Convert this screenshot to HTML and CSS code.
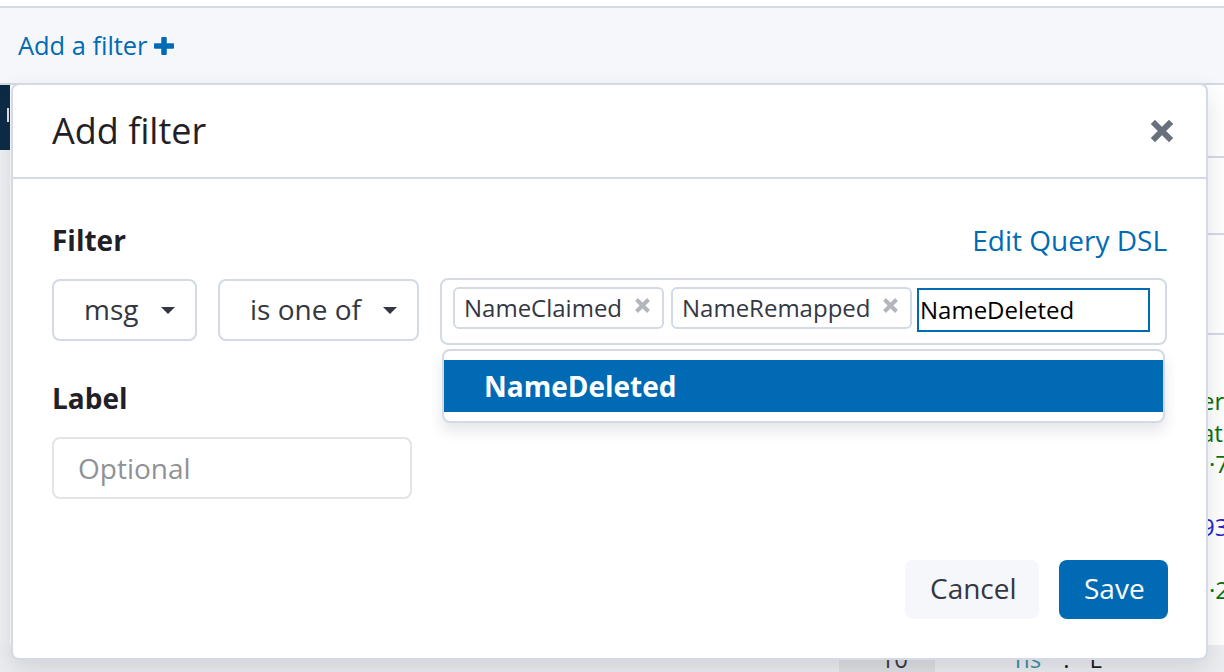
FILE: index.html
```html
<!DOCTYPE html>
<html lang="en">
<head>
<meta charset="utf-8">
<title>Add filter</title>
<link rel="stylesheet" href="styles.css">
</head>
<body>
<div class="app">
  <div class="topstrip"></div>
  <div class="filterbar">
    <a class="add-filter">Add a filter <svg class="plus-icon" viewBox="0 0 20 18" aria-hidden="true"><rect x="7.25" y="0" width="5.5" height="18" rx="1"/><rect x="0" y="6.25" width="20" height="5.5" rx="1"/></svg></a>
  </div>
  <div class="main">
    <aside class="sidebar">
      <div class="sidebar-head"><span class="sidebar-mark"></span></div>
    </aside>
    <section class="table-area"></section>
    <section class="doc-edge">
      <div class="doc-row r1"></div>
      <div class="doc-row r2"></div>
      <div class="doc-row r3"></div>
      <div class="code">
        <div class="ln green cut">er</div>
        <div class="ln green cut">at</div>
        <div class="ln green">·7</div>
        <div class="ln">&nbsp;</div>
        <div class="ln blue cut">93</div>
        <div class="ln">&nbsp;</div>
        <div class="ln green">·2</div>
      </div>
    </section>
  </div>
  <div class="bottom-row">
    <span class="num-cell">10</span>
    <span class="tok teal">ns</span>
    <span class="tok colon">:</span>
    <span class="tok">L</span>
  </div>
</div>

<div class="modal" role="dialog" aria-label="Add filter">
  <div class="modal-header">
    <h2 class="modal-title">Add filter</h2>
    <button class="modal-close" aria-label="Close"><svg viewBox="0 0 24 24" aria-hidden="true"><path d="M5 5L19 19M19 5L5 19"/></svg></button>
  </div>
  <div class="modal-body">
    <div class="field-head">
      <span class="field-label">Filter</span>
      <a class="dsl-link">Edit Query DSL</a>
    </div>
    <div class="filter-row">
      <div class="select sel-field"><span>msg</span><span class="caret"></span></div>
      <div class="select sel-op"><span>is one of</span><span class="caret"></span></div>
      <div class="combo">
        <span class="pill p1"><span>NameClaimed</span><svg class="pill-x" viewBox="0 0 17 17" aria-hidden="true"><path d="M2.5 2.5L14.5 14.5M14.5 2.5L2.5 14.5"/></svg></span>
        <span class="pill p2"><span>NameRemapped</span><svg class="pill-x" viewBox="0 0 17 17" aria-hidden="true"><path d="M2.5 2.5L14.5 14.5M14.5 2.5L2.5 14.5"/></svg></span>
        <input class="combo-input" type="text" value="NameDeleted">
        <div class="combo-list">
          <div class="combo-option active">NameDeleted</div>
        </div>
      </div>
    </div>
    <div class="field-label label-2">Label</div>
    <input class="text-input" type="text" placeholder="Optional">
  </div>
  <div class="modal-footer">
    <button class="btn btn-cancel">Cancel</button>
    <button class="btn btn-save">Save</button>
  </div>
</div>
</body>
</html>
```
FILE: styles.css
```css
html, body {
  margin: 0;
  padding: 0;
}

body {
  width: 1224px;
  height: 672px;
  overflow: hidden;
  position: relative;
  background: #fff;
  color: #343741;
  font-family: "Open Sans", "Noto Sans", sans-serif;
}

/* ---------- background page ---------- */
.topstrip {
  height: 6px;
  background: #fff;
  border-bottom: 2px solid #d3dae6;
}

.filterbar {
  height: 75px;
  box-sizing: border-box;
  background: #f5f7fa;
  padding: 19px 0 0 18px;
}

.add-filter {
  display: block;
  color: #006bb4;
  font-size: 25.4px;
  line-height: 37px;
  text-decoration: none;
}

.plus-icon {
  width: 20px;
  height: 18px;
  fill: #006bb4;
  vertical-align: baseline;
}

.main {
  display: grid;
  grid-template-columns: 10px 1198px 16px;
  height: 562px;
  box-sizing: border-box;
  border-top: 2px solid #d3dae6;
}

.sidebar {
  background: #eef0f4;
}

.sidebar-head {
  height: 65px;
  background: #0d2a45;
  padding-top: 23px;
  box-sizing: border-box;
}

.sidebar-mark {
  display: block;
  width: 2px;
  height: 14px;
  margin-left: 7px;
  background: #dfe6ee;
}

.table-area {
  background: #fff;
}

.doc-edge {
  background: #fff;
  overflow: hidden;
}

.doc-row {
  border-bottom: 2px solid #d3dae6;
}

.r1 { height: 71px; }
.r2 { height: 75px; }
.r3 { height: 98px; }

.code {
  padding-top: 50px;
  font-size: 24px;
  line-height: 31.5px;
  white-space: nowrap;
}

.ln {
  padding-left: 1px;
}

.ln.cut {
  text-indent: -8px;
}

.green { color: #0a700a; }
.blue { color: #2222c8; }

.bottom-row {
  display: flex;
  height: 27px;
  background: #eceef1;
  padding-left: 839px;
  font-size: 24px;
  line-height: 27px;
  white-space: nowrap;
}

.num-cell {
  width: 96px;
  box-sizing: border-box;
  background: #dfe0e3;
  text-align: right;
  padding-right: 27px;
}

.tok {
  color: #1a1c21;
}

.tok.teal {
  color: #3a8fa3;
  margin-left: 80px;
}

.tok.colon {
  margin-left: 22px;
  margin-right: 20px;
}

/* ---------- modal ---------- */
.modal {
  position: absolute;
  left: 11px;
  top: 83px;
  width: 1197px;
  height: 577px;
  box-sizing: border-box;
  background: #fff;
  border: 2px solid #d3dae6;
  border-radius: 8px;
  box-shadow: 0 10px 24px rgba(40, 50, 70, 0.14);
  display: flex;
  flex-direction: column;
}

.modal-header {
  display: flex;
  align-items: center;
  justify-content: space-between;
  padding: 19px 32px 19px 39px;
  border-bottom: 2px solid #d3dae6;
}

.modal-title {
  margin: 0;
  font-size: 36px;
  line-height: 54px;
  font-weight: 400;
  color: #1f2126;
}

.modal-close {
  border: 0;
  background: none;
  padding: 0;
  width: 24px;
  height: 24px;
  display: block;
  cursor: pointer;
}

.modal-close svg {
  display: block;
  width: 24px;
  height: 24px;
  stroke: #69707d;
  stroke-width: 6;
  stroke-linecap: square;
  fill: none;
}

.modal-body {
  padding: 40px 39px 0 39px;
  display: flex;
  flex-direction: column;
  align-items: flex-start;
}

.field-head {
  align-self: stretch;
  display: flex;
  justify-content: space-between;
  align-items: baseline;
}

.field-label {
  font-size: 28px;
  line-height: 42px;
  font-weight: 700;
  color: #1f2126;
}

.dsl-link {
  font-size: 28px;
  line-height: 42px;
  color: #006bb4;
  text-decoration: none;
}

.filter-row {
  align-self: stretch;
  display: flex;
  align-items: flex-start;
  gap: 21px;
  margin-top: 17px;
}

.select {
  height: 62px;
  box-sizing: border-box;
  border: 2px solid #d3dae6;
  border-radius: 8px;
  display: flex;
  align-items: center;
  justify-content: space-between;
  padding: 0 20px 2px 30px;
  font-size: 28px;
  line-height: 42px;
  color: #343741;
  margin-top: 1px;
}

.select .caret {
  margin-top: 2px;
}

.sel-field { width: 145px; }
.sel-op { width: 201px; }

.caret {
  width: 0;
  height: 0;
  border-left: 7px solid transparent;
  border-right: 7px solid transparent;
  border-top: 7px solid #343741;
}

.combo {
  position: relative;
  flex: 1;
  height: 67px;
  box-sizing: border-box;
  border: 2px solid #d3dae6;
  border-radius: 8px;
  padding: 7px 10px 0 11px;
  display: flex;
  align-items: flex-start;
}

.pill {
  height: 42px;
  box-sizing: border-box;
  border: 2px solid #d3dae6;
  border-radius: 6px;
  display: flex;
  align-items: center;
  justify-content: space-between;
  padding: 0 11px 1px 9px;
  font-size: 24px;
  line-height: 36px;
  color: #343741;
  white-space: nowrap;
}

.p1 { width: 211px; margin-right: 7px; }
.p2 { width: 241px; margin-right: 5px; }

.pill-x {
  width: 17px;
  height: 17px;
  stroke: #b2b6bc;
  stroke-width: 4;
  fill: none;
  flex: none;
  margin-bottom: 4px;
}

.combo-input {
  width: 233px;
  height: 44px;
  box-sizing: border-box;
  margin: 1px 0 0 0;
  border: 2px solid #006bb4;
  border-radius: 0;
  padding: 0 0 2px 1px;
  outline: none;
  background: #fff;
  font-family: "Open Sans", "Noto Sans", sans-serif;
  font-size: 24px;
  color: #000;
}

.combo-list {
  position: absolute;
  left: 0;
  top: 69px;
  width: 723px;
  box-sizing: border-box;
  background: #fff;
  border: 2px solid #d3dae6;
  border-radius: 8px;
  padding: 9px 0;
  box-shadow: 0 8px 14px rgba(40, 50, 70, 0.12);
  z-index: 2;
}

.combo-option {
  height: 52px;
  display: flex;
  align-items: center;
  padding-left: 40px;
  padding-bottom: 1px;
  box-sizing: border-box;
  font-size: 28px;
  line-height: 42px;
  font-weight: 700;
}

.combo-option.active {
  background: #006bb4;
  color: #fff;
}

.label-2 {
  margin-top: 32px;
}

.text-input {
  margin-top: 18px;
  width: 360px;
  height: 62px;
  box-sizing: border-box;
  border: 2px solid #e3e4e6;
  border-radius: 8px;
  padding: 0 0 1px 24px;
  outline: none;
  font-family: "Open Sans", "Noto Sans", sans-serif;
  font-size: 28px;
  color: #343741;
  background: #fff;
}

.text-input::placeholder {
  color: #8f9296;
}

.modal-footer {
  margin-top: auto;
  display: flex;
  justify-content: flex-end;
  gap: 20px;
  padding: 0 38px 39px 0;
}

.btn {
  height: 59px;
  border: 0;
  border-radius: 8px;
  padding: 0 25px 3px;
  font-family: "Open Sans", "Noto Sans", sans-serif;
  font-size: 28px;
  line-height: 42px;
  cursor: pointer;
}

.btn-cancel {
  width: 134px;
  background: #f5f7fa;
  color: #343741;
}

.btn-save {
  width: 109px;
  background: #006bb4;
  color: #fff;
}
```
